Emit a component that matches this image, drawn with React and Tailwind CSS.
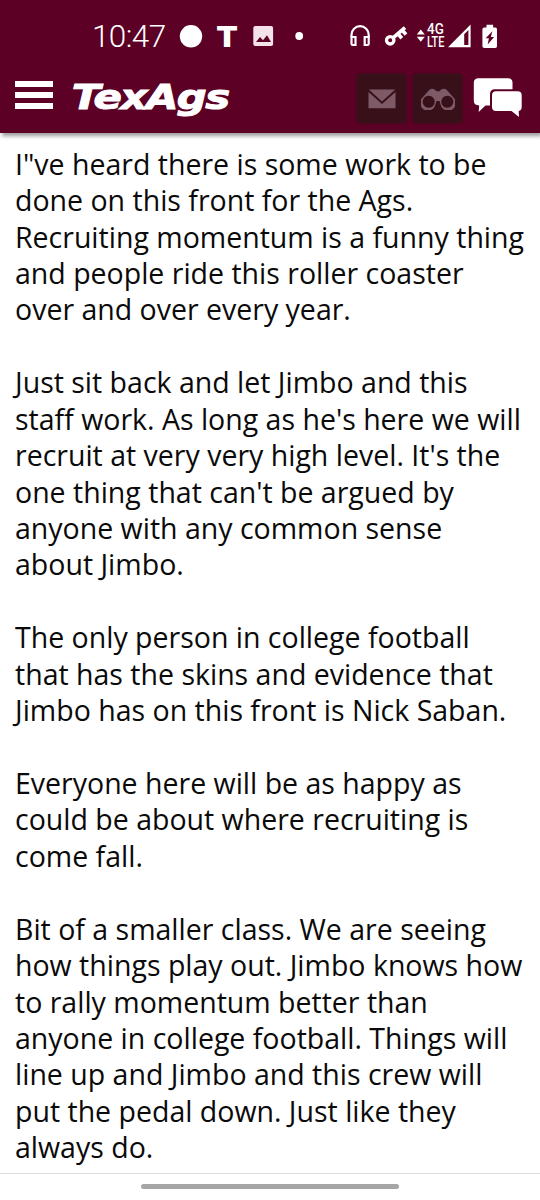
const posts = [
  ['I"ve heard there is some work to be', 'done on this front for the Ags.', 'Recruiting momentum is a funny thing', 'and people ride this roller coaster', 'over and over every year.'],
  ['Just sit back and let Jimbo and this', "staff work. As long as he's here we will", "recruit at very very high level. It's the", "one thing that can't be argued by", 'anyone with any common sense', 'about Jimbo.'],
  ['The only person in college football', 'that has the skins and evidence that', 'Jimbo has on this front is Nick Saban.'],
  ['Everyone here will be as happy as', 'could be about where recruiting is', 'come fall.'],
  ['Bit of a smaller class. We are seeing', 'how things play out. Jimbo knows how', 'to rally momentum better than', 'anyone in college football. Things will', 'line up and Jimbo and this crew will', 'put the pedal down. Just like they', 'always do.'],
];

function StatusBar() {
  return (
    <div className="flex h-[65px] items-start pt-5 pl-[92px]">
      <span className="mt-px w-[87px] font-['Roboto'] text-[31.5px] leading-8 font-light tracking-[-0.6px] whitespace-nowrap">10:47</span>
      {/* Notifications */}
      <svg className="h-8 w-[130px]" viewBox="0 0 130 32" fill="currentColor">
        <circle cx="12" cy="16.3" r="11.2" />
        <text x="37.2" y="26.5" fontFamily="Inter, sans-serif" fontWeight="900" fontSize="28" textLength="21.6" lengthAdjust="spacingAndGlyphs">T</text>
        <rect x="74.3" y="6" width="19.8" height="20" rx="2" fill="#f3e2ea" />
        <path d="M77 22l4-5 3 3.2 4-5 4 6.8z" fill="#5c0025" />
        <circle cx="120.2" cy="16" r="3.9" />
      </svg>
      {/* System icons */}
      <svg className="ml-[31px] h-8 w-[170px]" viewBox="340 20 170 32" fill="currentColor">
        <path d="M351.5 37v-2.2a8.6 8.6 0 0 1 17.2 0V37" fill="none" stroke="currentColor" strokeWidth="2.2" />
        <path d="M351.5 37h4v8h-2.8q-1.2 0-1.2-1.2zM368.7 37h-4v8h2.8q1.2 0 1.2-1.2z" fill="none" stroke="currentColor" strokeWidth="2.2" />
        <circle cx="390.2" cy="40.3" r="3.7" fill="none" stroke="currentColor" strokeWidth="3.3" />
        <path d="M393 37.8L405 27.6M398 33.8l3.8 4.4M402.2 30.2l3.8 4.2" fill="none" stroke="currentColor" strokeWidth="3.7" />
        <path d="M416.8 34.6h8l-4-5zM416.8 36.8h8l-4 5z" />
        <text x="427" y="34.4" fontFamily="Roboto, sans-serif" fontWeight="500" fontSize="13.8" textLength="16.8" lengthAdjust="spacingAndGlyphs">4G</text>
        <text x="427" y="46.6" fontFamily="Roboto, sans-serif" fontWeight="500" fontSize="13.8" textLength="17.3" lengthAdjust="spacingAndGlyphs">LTE</text>
        <path fillRule="evenodd" d="M448 47.2L470.6 24.6v22.6zM464.2 34.2V45h4.2V30z" />
        <path fillRule="evenodd" d="M486.5 27.5v-2.8h6.6v2.8h2.2q1.7 0 1.7 1.7v17q0 1.8-1.7 1.8h-11q-1.9 0-1.9-1.8v-17q0-1.7 1.9-1.7zM492.3 31.2l-6.6 7h3.2l-1.2 6.2 6.4-7.4h-3.2z" />
      </svg>
    </div>
  );
}

function NavBar() {
  return (
    <div className="flex h-[68px] items-start pl-[15px]">
      <button className="mt-4 flex w-[38px] flex-col gap-[5.5px]" aria-label="Menu">
        <span className="h-[5.6px] w-full bg-white" />
        <span className="h-[5.6px] w-full bg-white" />
        <span className="h-[5.6px] w-full bg-white" />
      </button>
      <svg className="ml-[12px] h-[60px] w-[175px]" viewBox="65 65 175 60" fill="currentColor">
        <text x="71.8" y="109.2" fontFamily="'DejaVu Sans', sans-serif" fontWeight="700" fontStyle="italic" fontSize="34.5" letterSpacing="-1.2" stroke="currentColor" strokeWidth="1" textLength="157" lengthAdjust="spacingAndGlyphs">TexAgs</text>
      </svg>
      <button className="mt-[9px] ml-[117px] flex h-[49px] w-[49px] items-center justify-center rounded-[3px] bg-[#37101a] shadow-[0_0_3px_#37101a]" aria-label="Messages">
        <svg className="h-5 w-7" viewBox="0 0 28 20" fill="#7d5a66">
          <path d="M.8.5h26.4L14 12.4zM.5 3L14 15 27.5 3v16.3H.5z" />
        </svg>
      </button>
      <button className="mt-[9px] ml-[7px] flex h-[49px] w-[49px] items-center justify-center rounded-[3px] bg-[#37101a] shadow-[0_0_3px_#37101a]" aria-label="Watch list">
        <svg className="h-[22px] w-[34px]" viewBox="0 0 34 22" fill="#7d5a66">
          <path fillRule="evenodd" d="M2 9L8 2.2Q11-.5 14 1.8l1.5 1.5h3L20 1.8q3-2.3 6 .4L32 9a7.7 7.7 0 1 1-12.3 8L18.5 13h-3l-1.2 4A7.7 7.7 0 1 1 2 9zM7.7 7.8a6 6 0 1 0 .01 0zM26.3 7.8a6 6 0 1 0 .01 0z" />
        </svg>
      </button>
      <svg className="mt-2.5 ml-[7px] h-[60px] w-[60px]" viewBox="469 75 60 60" fill="currentColor">
        <path d="M478.5 78.3H508q4.5 0 4.5 4.5v6.4H495q-5 0-5 5v11.2h-4.5l-6.8 6.6.5-6.6q-5.4-.2-5.4-5V82.8q0-4.5 4.7-4.5z" />
        <path d="M496 91.2h21.5q4.2 0 4.2 4.2v11.3q0 3.8-3 4.2l.3 6-7.5-5.8H496q-4 0-4-4V95.4q0-4.2 4-4.2z" />
      </svg>
    </div>
  );
}

export default function App() {
  return (
    <div className="flex h-[1200px] w-[540px] flex-col overflow-hidden bg-white">
      <header className="h-[133px] shrink-0 bg-[#5c0025] text-white shadow-[2px_3px_4px_rgba(0,0,0,0.4)]">
        <StatusBar />
        <NavBar />
      </header>
      <main className="flex h-[1041px] shrink-0 flex-col gap-[36.4px] border-b border-[#dedede] pt-[12.7px] pl-[15px] font-['Open_Sans'] text-[28.5px] leading-[36.43px] text-[#0a0a0a]">
        {posts.map((lines, i) => (
          <p key={i} className="whitespace-nowrap">
            {lines.map((line) => (
              <span key={line} className="block">{line}</span>
            ))}
          </p>
        ))}
      </main>
      <div className="mt-[10px] ml-[141px] h-[5px] w-[258px] rounded-full bg-[#a6a6a6]" />
    </div>
  );
}
